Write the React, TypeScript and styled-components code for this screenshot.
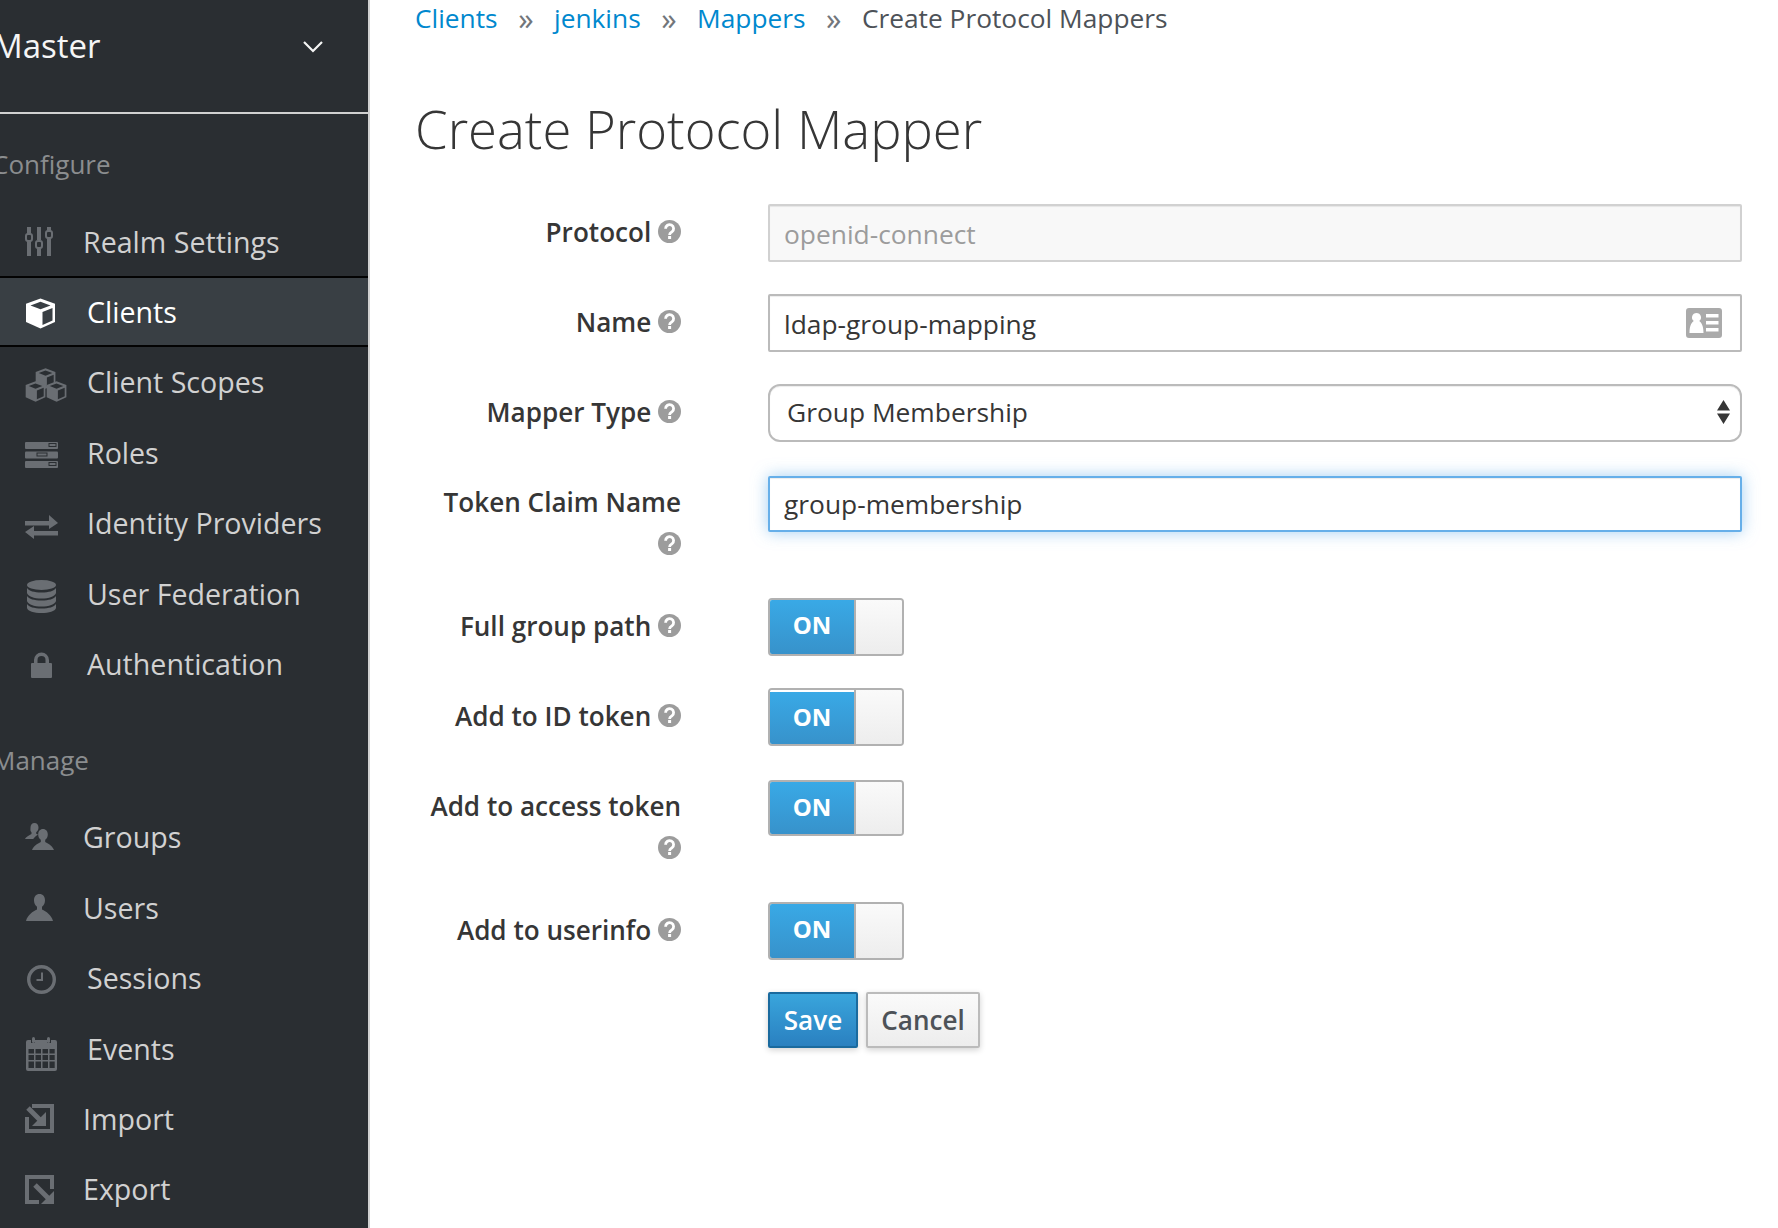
import * as React from "react";
import styled, { createGlobalStyle } from "styled-components";

const GlobalStyle = createGlobalStyle`
  html, body {
    margin: 0;
    padding: 0;
    background: #fff;
    font-family: "Open Sans", "Noto Sans", sans-serif;
    color: #363636;
  }
  * {
    box-sizing: border-box;
  }
`;

const Page = styled("div")`
  display: flex;
  width: 1778px;
  height: 1228px;
  overflow: hidden;
`;

const Sidebar = styled("nav")`
  flex: 0 0 370px;
  background: #2a2e32;
  border-right: 2px solid #d1d1d1;
  overflow: hidden;
`;

const RealmHeader = styled("div")`
  display: flex;
  align-items: center;
  justify-content: space-between;
  height: 114px;
  padding: 0 45px 22px 0;
  border-bottom: 2px solid #d1d1d1;
  color: #f5f5f5;
  font-size: 33px;
  svg {
    flex: none;
    margin-top: 4px;
  }
`;

const RealmName = styled("span")`
  margin-left: -7px;
`;

const Section = styled("div")`
  & + & {
    padding-top: 11px;
  }
`;

const SectionTitle = styled("div")`
  margin: 32px 0 24px -8px;
  line-height: 36px;
  font-size: 26px;
  color: #8b8d8f;
`;

const Item = styled("div")<{ $active?: boolean }>`
  display: flex;
  align-items: center;
  height: 70.4px;
  padding-left: 25px;
  font-size: 28.6px;
  color: ${props => (props.$active ? "#fff" : "#d1d1d1")};
  background: ${props => (props.$active ? "#393f44" : "transparent")};
  border-top: 2px solid ${props => (props.$active ? "#030303" : "transparent")};
  border-bottom: 2px solid ${props => (props.$active ? "#030303" : "transparent")};
`;

const IconSlot = styled("span")<{ $narrow?: boolean; $inset?: number; $drop?: number }>`
  display: flex;
  align-items: center;
  flex: 0 0 ${props => (props.$narrow ? "58px" : "62px")};
  padding-left: ${props => props.$inset || 0}px;
  padding-top: ${props => (props.$drop || 0) * 2}px;
  color: #6a6e73;
`;

const Main = styled("main")`
  flex: 1;
  min-width: 0;
  padding: 0 36px 0 45px;
`;

const Breadcrumb = styled("div")`
  display: flex;
  align-items: center;
  gap: 20.5px;
  height: 36px;
  font-size: 26.3px;
  color: #4d5258;
`;

const Crumb = styled("a")`
  color: #0088ce;
  text-decoration: none;
`;

const Separator = styled("span")`
  color: #72767b;
  font-size: 31px;
  line-height: 36px;
`;

const Title = styled("h1")`
  margin: 64px 0 46px;
  font-size: 52.6px;
  line-height: 58px;
  font-weight: 300;
  color: #363636;
`;

const Form = styled("form")`
  display: flex;
  flex-direction: column;
  gap: 32px;
`;

const Row = styled("div")`
  display: grid;
  grid-template-columns: 266px 1fr;
  column-gap: 87px;
  align-items: start;
`;

const Label = styled("label")`
  padding: 7px 0 1px 8px;
  text-align: right;
  font-size: 26.1px;
  line-height: 42px;
  font-weight: 600;
  color: #363636;
  svg {
    vertical-align: -1px;
    color: #9c9c9c;
  }
`;

const TextInput = styled("input")<{ $focused?: boolean }>`
  display: block;
  width: 100%;
  height: ${props => (props.$focused ? "56px" : "58px")};
  margin-top: ${props => (props.$focused ? "2px" : "0")};
  padding: ${props => (props.$focused ? "0 14px" : "2px 14px 0")};
  font-family: inherit;
  font-size: 26.35px;
  color: #363636;
  background: #fff;
  border: 2px solid ${props => (props.$focused ? "#66afe9" : "#bbb")};
  border-radius: 2px;
  outline: none;
  box-shadow: ${props =>
    props.$focused
      ? "inset 0 1px 1px rgba(3,3,3,0.075), 0 0 16px rgba(102,175,233,0.6)"
      : "inset 0 1px 1px rgba(3,3,3,0.075)"};
  &:disabled {
    color: #9c9c9c;
    background: #f8f8f8;
    border-color: #d1d1d1;
    opacity: 1;
  }
`;

const Control = styled("div")`
  position: relative;
`;

const CardIcon = styled("svg")`
  position: absolute;
  top: 14px;
  right: 20px;
  color: #aaa;
`;

const SelectBox = styled("select")`
  display: block;
  width: 100%;
  height: 58px;
  padding: 0 17px 2px;
  appearance: none;
  font-family: inherit;
  font-size: 26.35px;
  color: #363636;
  background: #fff;
  border: 2px solid #bbb;
  border-radius: 12px;
  outline: none;
  box-shadow: inset 0 1px 1px rgba(3, 3, 3, 0.075);
`;

const SelectArrows = styled("svg")`
  position: absolute;
  top: 16px;
  right: 12px;
  pointer-events: none;
  color: #363636;
`;

const Toggle = styled("div")<{ $short?: boolean }>`
  display: flex;
  width: 136px;
  height: ${props => (props.$short ? "56px" : "58px")};
  margin-top: ${props => (props.$short ? "2px" : "0")};
  border: 2px solid #b1b1b1;
  border-radius: 4px;
  overflow: hidden;
`;

const ToggleOn = styled("span")<{ $gap?: boolean; $short?: boolean }>`
  display: flex;
  align-items: center;
  justify-content: center;
  flex: 0 0 84px;
  padding-bottom: ${props => (props.$gap ? "4px" : props.$short ? "4px" : "6px")};
  font-size: 24px;
  font-weight: 700;
  color: #fff;
  background: linear-gradient(to bottom, #39a9e6, #3792cb);
  border-top: ${props => (props.$gap ? "2px solid #fff" : "0")};
`;

const ToggleHandle = styled("span")`
  flex: 1;
  background: linear-gradient(to bottom, #fafafa, #ededed);
  border-left: 2px solid #b1b1b1;
`;

const Buttons = styled("div")`
  display: flex;
  gap: 8px;
`;

const Button = styled("button")<{ $primary?: boolean }>`
  height: 56px;
  padding: 0;
  width: ${props => (props.$primary ? "90px" : "114px")};
  font-family: inherit;
  font-size: 26.1px;
  font-weight: 600;
  color: ${props => (props.$primary ? "#fff" : "#4d5258")};
  background: ${props =>
    props.$primary
      ? "linear-gradient(to bottom, #39a5dc, #2a80c0)"
      : "linear-gradient(to bottom, #fafafa, #ededed)"};
  border: 2px solid ${props => (props.$primary ? "#1a6a9e" : "#bbb")};
  border-radius: 2px;
  box-shadow: 0 2px 6px rgba(3, 3, 3, 0.18);
`;

const HelpIcon = () => (
  <svg width="23" height="23" viewBox="0 0 23 23">
    <circle cx="11.5" cy="11.5" r="11.5" fill="currentColor" />
    <path
      d="M7.600 8.800a4 4 0 1 1 6.300 3.100c-1.300.9-2.300 1.400-2.300 3"
      fill="none"
      stroke="#fff"
      strokeWidth="2.800"
    />
    <rect x="10.100" y="16" width="3" height="3" fill="#fff" />
  </svg>
);

const SlidersIcon = () => (
  <svg width="28" height="29" viewBox="0 0 28 29" fill="currentColor">
    <path d="M2 0h4v7H2zM2 14h4v15H2zM12 0h4v13h-4zM12 21h4v8h-4zM22 0h4v4h-4zM22 11h4v18h-4z" />
    <g fill="none" stroke="currentColor" strokeWidth="2">
      <rect x="1" y="7" width="6" height="7" rx="2" />
      <rect x="11" y="14" width="6" height="7" rx="2" />
      <rect x="21" y="4" width="6" height="7" rx="2" />
    </g>
  </svg>
);

const cubePaths = (
  <>
    <path d="M15.500 0.500L30 5.800V24L15.500 30.500L1 24V5.800Z" fill="currentColor" />
    <path d="M15.500 3.800L25.500 7.400L15.500 11.300L5.500 7.400Z" fill="var(--cube-face)" />
    <path d="M17.500 14L27.500 10V22.500L17.500 27Z" fill="var(--cube-face)" />
  </>
);

const CubeIcon = () => (
  <svg width="31" height="31" viewBox="0 0 31 31" color="#fff" style={{ "--cube-face": "#393f44" } as React.CSSProperties}>
    {cubePaths}
  </svg>
);

const CubesIcon = () => (
  <svg width="42" height="34" viewBox="0 0 42 34" style={{ "--cube-face": "#2a2e32" } as React.CSSProperties}>
    <g transform="translate(10 0) scale(0.68)">{cubePaths}</g>
    <g transform="translate(0 13) scale(0.68)">{cubePaths}</g>
    <g transform="translate(21 13) scale(0.68)">{cubePaths}</g>
  </svg>
);

const ServerIcon = () => (
  <svg width="33" height="26" viewBox="0 0 33 26" fill="currentColor">
    <rect width="33" height="7" y="0" rx="1" />
    <rect width="33" height="7" y="9.500" rx="1" />
    <rect width="33" height="7" y="19" rx="1" />
    <g fill="none" stroke="#2a2e32">
      <rect x="24" y="1.500" width="7" height="3" />
      <rect x="12" y="11" width="10" height="3" />
      <rect x="24" y="20.500" width="7" height="3" />
    </g>
  </svg>
);

const ExchangeIcon = () => (
  <svg width="33" height="24" viewBox="0 0 33 24" fill="currentColor">
    <path d="M0 6H24V0L33 8L24 14V10.500H0Z" />
    <path d="M33 16V20.500H9V24L0 17L9 11V16Z" />
  </svg>
);

const DatabaseIcon = () => (
  <svg width="29" height="33" viewBox="0 0 29 33" fill="currentColor">
    <ellipse cx="14.500" cy="5" rx="14.500" ry="5" />
    <path d="M0 8c2 3 7 4.500 14.500 4.500S27 11 29 8v5c-1 3.500-7 5.500-14.500 5.500S1 16.500 0 13z" />
    <path d="M0 16c2 3 7 4.500 14.500 4.500S27 19 29 16v5c-1 3.500-7 5.500-14.500 5.500S1 24.500 0 21z" />
    <path d="M0 24c2 3 7 4.500 14.500 4.500S27 27 29 24v4c-1 3.500-7 5-14.500 5S1 31.500 0 28z" />
  </svg>
);

const LockIcon = () => (
  <svg width="21" height="26" viewBox="0 0 21 26" fill="currentColor">
    <path d="M3 11V8a7.500 7.500 0 0 1 15 0v3h2a1 1 0 0 1 1 1v13a1 1 0 0 1-1 1H1a1 1 0 0 1-1-1V12a1 1 0 0 1 1-1zm3.500 0h8V8a4 4 0 0 0-8 0z" />
  </svg>
);

const GroupIcon = () => (
  <svg width="29" height="27" viewBox="0 0 29 27" fill="currentColor">
    <path d="M9.500 0c2.500 0 4 2 4 4.500 0 2-.8 3.700-2.300 4.700v1.500l1.800.8c-1.800 1.300-3.500 2.500-4.800 4.500H0c.5-1.500 3.500-3.500 6.500-5V9.200C5 8.200 5.500 6.500 5.500 4.500 5.500 2 7 0 9.500 0z" />
    <path d="M18 6c3 0 4.800 2.400 4.800 5.300 0 2.300-.8 4.300-2.600 5.500v2.200c3.500 1.600 7.500 4.300 8.800 8H7c1.300-3.700 5.300-6.400 8.800-8v-2.200c-1.800-1.200-2.600-3.200-2.600-5.500C13.200 8.400 15 6 18 6z" />
  </svg>
);

const UserIcon = () => (
  <svg width="27" height="27" viewBox="0 0 27 27" fill="currentColor">
    <path d="M13.500 0c3.500 0 5.500 2.700 5.500 6.200 0 2.800-1 5.200-3 6.600v2.700c4 1.700 9.500 5.500 11 11.500H0c1.500-6 7-9.800 11-11.500v-2.700c-2-1.400-3-3.800-3-6.600C8 2.700 10 0 13.500 0z" />
  </svg>
);

const ClockIcon = () => (
  <svg width="29" height="29" viewBox="0 0 29 29" fill="none" stroke="currentColor">
    <circle cx="14.500" cy="14.500" r="12.800" strokeWidth="3.400" />
    <path d="M15 7.500v7.500H9.500" strokeWidth="2" />
  </svg>
);

const CalendarIcon = () => (
  <svg width="31" height="34" viewBox="0 0 31 34" fill="currentColor">
    <path
      fillRule="evenodd"
      d="M2 3h3v3h4V3h12v3h4V3h4a2 2 0 0 1 2 2v27a2 2 0 0 1-2 2H2a2 2 0 0 1-2-2V5a2 2 0 0 1 2-2zM2.500 12v4.500h5.500V12zM9.500 12v4.500h5.500V12zM16.500 12v4.500h5.500V12zM23.500 12v4.500h5.200V12zM2.500 18v5h5.500v-5zM9.500 18v5h5.500v-5zM16.500 18v5h5.500v-5zM23.500 18v5h5.200v-5zM2.500 24.500v6.500h5.500v-6.500zM9.500 24.500v6.500h5.500v-6.500zM16.500 24.500v6.500h5.500v-6.500zM23.500 24.500v6.500h5.200v-6.500z"
    />
    <rect x="6" y="0" width="3" height="6" rx="1.500" />
    <rect x="21" y="0" width="3" height="6" rx="1.500" />
  </svg>
);

const ImportIcon = () => (
  <svg width="29" height="29" viewBox="0 0 29 29" fill="currentColor">
    <path d="M7 2H27V27H2V13" fill="none" stroke="currentColor" strokeWidth="4" />
    <path d="M3 4L17 18" stroke="currentColor" strokeWidth="5" />
    <path d="M21 8V22H7Z" />
  </svg>
);

const ExportIcon = () => (
  <svg width="29" height="29" viewBox="0 0 29 29" fill="currentColor">
    <path d="M14 27H2V2H27V14" fill="none" stroke="currentColor" strokeWidth="4" />
    <path d="M10 10L24 24" stroke="currentColor" strokeWidth="5" />
    <path d="M29 16V29H16Z" />
  </svg>
);

const ChevronIcon = () => (
  <svg width="20" height="12" viewBox="0 0 20 12" fill="none" stroke="#f5f5f5" strokeWidth="2.200">
    <path d="M1 1l9 9 9-9" />
  </svg>
);

interface INavItem {
  label: string;
  icon: React.ReactNode;
  narrow?: boolean;
  active?: boolean;
  inset?: number;
  drop?: number;
}

const configureItems: INavItem[] = [
  { label: "Realm Settings", icon: <SlidersIcon />, narrow: true },
  { label: "Clients", icon: <CubeIcon />, active: true, drop: 2 },
  { label: "Client Scopes", icon: <CubesIcon />, drop: 3 },
  { label: "Roles", icon: <ServerIcon />, drop: 3 },
  { label: "Identity Providers", icon: <ExchangeIcon />, drop: 4 },
  { label: "User Federation", icon: <DatabaseIcon />, inset: 2, drop: 3 },
  { label: "Authentication", icon: <LockIcon />, inset: 6, drop: 1 }
];

const manageItems: INavItem[] = [
  { label: "Groups", icon: <GroupIcon />, narrow: true },
  { label: "Users", icon: <UserIcon />, narrow: true, inset: 1 },
  { label: "Sessions", icon: <ClockIcon />, inset: 2, drop: 2 },
  { label: "Events", icon: <CalendarIcon />, inset: 1, drop: 6 },
  { label: "Import", icon: <ImportIcon />, narrow: true },
  { label: "Export", icon: <ExportIcon />, narrow: true, drop: 1 }
];

const NavSection: React.FC<{ title: string; items: INavItem[] }> = ({ title, items }) => (
  <Section>
    <SectionTitle>{title}</SectionTitle>
    {items.map(item => (
      <Item key={item.label} $active={item.active}>
        <IconSlot $narrow={item.narrow} $inset={item.inset} $drop={item.drop}>
          {item.icon}
        </IconSlot>
        {item.label}
      </Item>
    ))}
  </Section>
);

const FieldLabel: React.FC<{ text: string }> = ({ text }) => (
  <Label>
    {text} <HelpIcon />
  </Label>
);

const SwitchRow: React.FC<{ label: string; short?: boolean; gap?: boolean }> = ({ label, short, gap }) => (
  <Row>
    <FieldLabel text={label} />
    <Toggle $short={short}>
      <ToggleOn $gap={gap} $short={short}>
        ON
      </ToggleOn>
      <ToggleHandle />
    </Toggle>
  </Row>
);

export default function App() {
  return (
    <Page>
      <GlobalStyle />
      <Sidebar>
        <RealmHeader>
          <RealmName>Master</RealmName>
          <ChevronIcon />
        </RealmHeader>
        <NavSection title="Configure" items={configureItems} />
        <NavSection title="Manage" items={manageItems} />
      </Sidebar>
      <Main>
        <Breadcrumb>
          <Crumb href="#">Clients</Crumb>
          <Separator>»</Separator>
          <Crumb href="#">jenkins</Crumb>
          <Separator>»</Separator>
          <Crumb href="#">Mappers</Crumb>
          <Separator>»</Separator>
          <span>Create Protocol Mappers</span>
        </Breadcrumb>
        <Title>Create Protocol Mapper</Title>
        <Form>
          <Row>
            <FieldLabel text="Protocol" />
            <TextInput disabled value="openid-connect" readOnly />
          </Row>
          <Row>
            <FieldLabel text="Name" />
            <Control>
              <TextInput value="ldap-group-mapping" readOnly />
              <CardIcon width="36" height="30" viewBox="0 0 36 30" fill="currentColor">
                <path
                  fillRule="evenodd"
                  d="M3 0h30a3 3 0 0 1 3 3v24a3 3 0 0 1-3 3H3a3 3 0 0 1-3-3V3a3 3 0 0 1 3-3zM10.500 5a4.500 4.500 0 0 0-2.700 8.100C6 14.500 3.500 17 3.500 25h14c0-8-2.500-10.500-4.300-11.900A4.500 4.500 0 0 0 10.500 5zM20 6v3.500h12.500V6zM20 13v3.500h12.500V13zM20 20v3.500h12.500V20z"
                />
              </CardIcon>
            </Control>
          </Row>
          <Row>
            <FieldLabel text="Mapper Type" />
            <Control>
              <SelectBox defaultValue="Group Membership">
                <option>Group Membership</option>
              </SelectBox>
              <SelectArrows width="13" height="24" viewBox="0 0 13 24" fill="currentColor">
                <path d="M6.500 0L13 10.500H0zM0 13.500h13L6.500 24z" />
              </SelectArrows>
            </Control>
          </Row>
          <Row>
            <FieldLabel text="Token Claim Name" />
            <TextInput $focused value="group-membership" readOnly />
          </Row>
          <SwitchRow label="Full group path" />
          <SwitchRow label="Add to ID token" gap />
          <SwitchRow label="Add to access token" short />
          <SwitchRow label="Add to userinfo" />
          <Row>
            <span />
            <Buttons>
              <Button type="button" $primary>
                Save
              </Button>
              <Button type="button">Cancel</Button>
            </Buttons>
          </Row>
        </Form>
      </Main>
    </Page>
  );
}
